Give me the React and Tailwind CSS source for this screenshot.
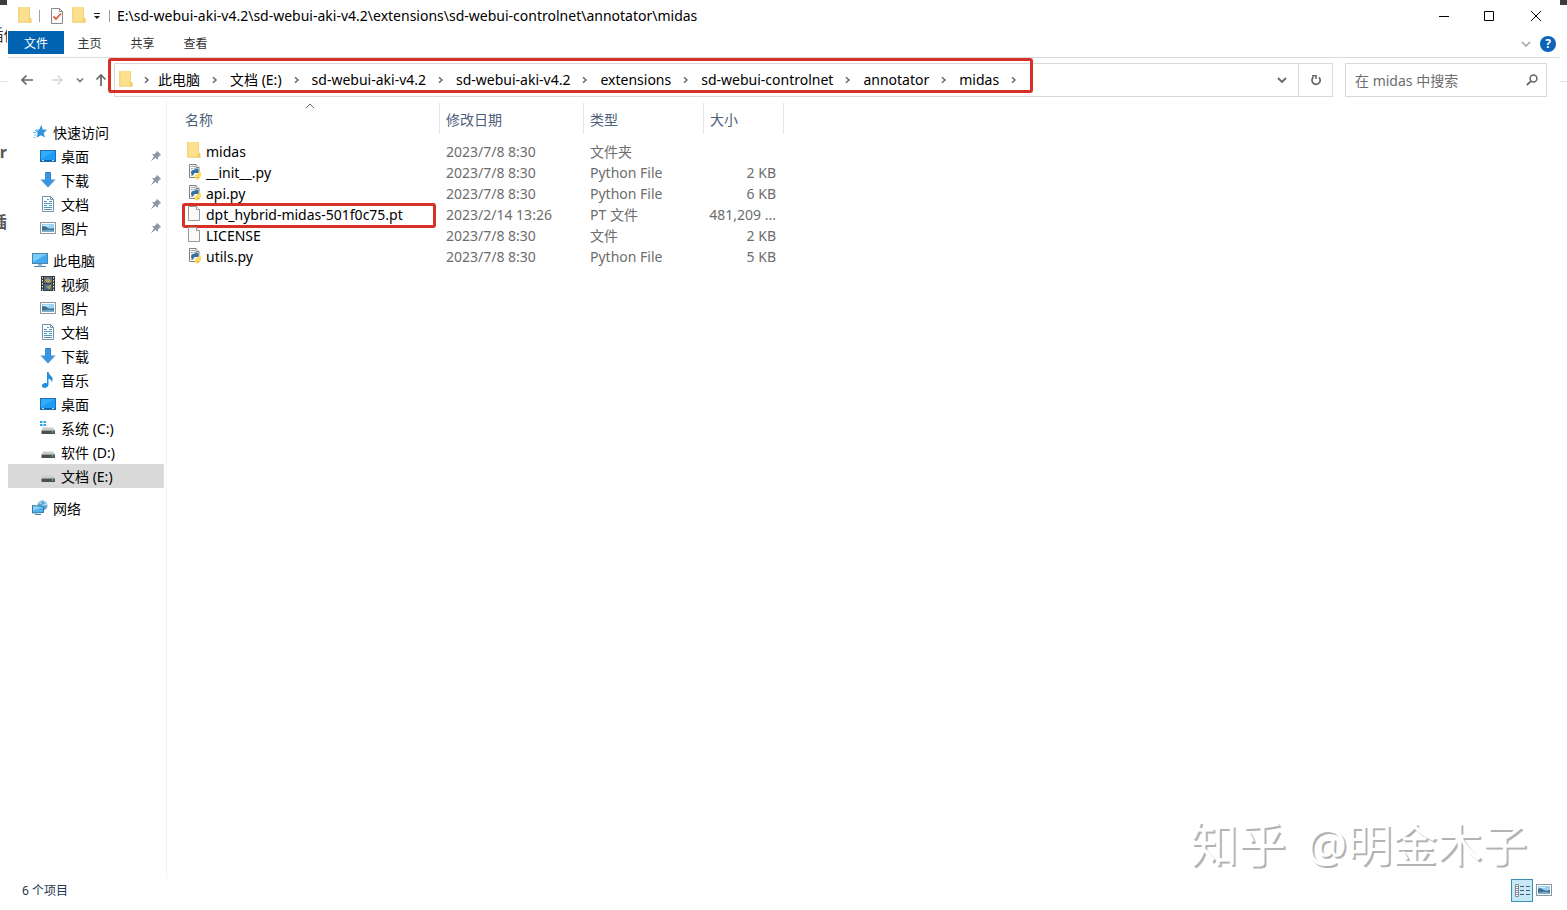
import React from 'react';

function FolderIcon() {
  return (
    <svg viewBox="0 0 16 18" className="h-[18px] w-4 shrink-0" aria-hidden="true">
      <path d="M.5 0h11v15H.5z" fill="#fbe08e" />
      <path d="M11 10.500q2.500-.5 2.500 1.500v3.500H11z" fill="#f3cd62" />
      <path d="M.8 0v15.500M.5 15.200h13" stroke="#efcb68" fill="none" />
      <path d="M11.500 0v10.500" stroke="#f1d27c" fill="none" />
    </svg>
  );
}

function FileIcon() {
  return (
    <svg viewBox="0 0 16 16" className="h-4 w-4 shrink-0" aria-hidden="true">
      <path d="M1.500.5h8l3 3v11h-11z" fill="#fafafa" stroke="#9a9a9a" />
      <path d="M9.500.5v3h3" fill="#fff" stroke="#9a9a9a" />
    </svg>
  );
}

function PythonIcon() {
  return (
    <svg viewBox="0 0 16 16" className="h-4 w-4 shrink-0" aria-hidden="true">
      <path d="M2.500.5h6.500l3 3v10h-9.500z" fill="#f7f7f7" stroke="#828282" />
      <path d="M9 .5v3h3" fill="#fff" stroke="#828282" />
      <path d="M4 2.500h4M4 4.500h2M4 11.500h2" stroke="#a5a9ac" />
      <path d="M7 4.500h3q1.500 0 1.500 1.500v3H8q-1.500 0-1.500 2H5.500Q4 11 4 8.500T6 6h2.500v-.5h-2z" fill="#33709f" />
      <path d="M11.700 7.500h1q1.500.3 1.500 3t-2 2.500H10v.6h2.500v.7q0 1.200-2.200 1.200T8 14.300v-2.500Q8 10 10 10h1.700z" fill="#ffdb58" />
    </svg>
  );
}

function CheckDocIcon() {
  return (
    <svg viewBox="0 0 14 16" className="h-4 w-[14px]" aria-hidden="true">
      <path d="M1.500.5h8l3 3v12h-11z" fill="#fbfbfb" stroke="#8a8a8a" />
      <path d="M9.500.5v3h3" fill="none" stroke="#8a8a8a" />
      <path d="M3.500 8.500l2.500 2.500 5-5.500" fill="none" stroke="#d9603b" strokeWidth="1.800" />
    </svg>
  );
}

function StarIcon() {
  return (
    <svg viewBox="0 0 16 16" className="h-4 w-4" aria-hidden="true">
      <path d="M9.500.8l1.200 4.700 4.500.3-3.500 3.200 1.200 4.500-4-2.300-4.200 2.500.9-4.700-2.600-3 4.300-.5z" fill="#2f93de" />
      <path d="M9.500.8L7.300 5.500 3 6l2.600 3z" fill="#63b8f1" />
      <path d="M1 8.500h3M2 11h2.500M1.500 13.500h2" stroke="#6fbdf0" />
    </svg>
  );
}

function DesktopIcon() {
  return (
    <svg viewBox="0 0 16 16" className="h-4 w-4" aria-hidden="true">
      <rect x=".5" y="2.500" width="15" height="11" fill="#1e9bf4" stroke="#1b72b5" />
      <path d="M1 3h14L1 11z" fill="#36aafb" />
      <path d="M1 12.500h14" stroke="#0d67ae" />
      <path d="M2 12.500h2M12 12.500h2" stroke="#b9e0fa" />
    </svg>
  );
}

function DownloadIcon() {
  return (
    <svg viewBox="0 0 16 16" className="h-4 w-4" aria-hidden="true">
      <path d="M5 .5h6v7h4.500L8 15.500.5 7.500H5z" fill="#3c94df" />
      <path d="M5.500.5h5v7" fill="none" stroke="#3180c6" />
    </svg>
  );
}

function DocumentIcon() {
  return (
    <svg viewBox="0 0 16 16" className="h-4 w-4" aria-hidden="true">
      <path d="M2.500.5h8l3 3v12h-11z" fill="#fdfeff" stroke="#7793a3" />
      <path d="M10.500.5v3h3" fill="none" stroke="#7793a3" />
      <path d="M7 3.500h2M4 5.500h3M9 5.500h3M4 7.500h8M4 9.500h3M9 9.500h3M4 11.500h8M4 13.500h8" stroke="#4f94bb" />
    </svg>
  );
}

function PictureIcon() {
  return (
    <svg viewBox="0 0 16 16" className="h-4 w-4" aria-hidden="true">
      <rect x=".5" y="2.500" width="15" height="11" fill="#fff" stroke="#8998a3" />
      <rect x="2" y="4" width="12" height="8" fill="#9bd0f2" />
      <path d="M2 6.500q3-1 5 1t7 .5V12H2z" fill="#3d6f91" />
      <path d="M2 10.500q6-1.500 12 0V12H2z" fill="#79add0" />
      <path d="M3 5h6v1H3z" fill="#d8eefa" />
    </svg>
  );
}

function PcIcon() {
  return (
    <svg viewBox="0 0 16 16" className="h-4 w-4" aria-hidden="true">
      <rect x=".5" y="1.500" width="15" height="10" fill="#3faaf0" stroke="#4a86ac" />
      <path d="M1 2h14L1 10z" fill="#7accf8" />
      <path d="M6 12h4v2H6z" fill="#8fb9cf" />
      <path d="M2 14.500h12" stroke="#5b8dab" />
    </svg>
  );
}

function VideoIcon() {
  return (
    <svg viewBox="0 0 16 16" className="h-4 w-4" aria-hidden="true">
      <path d="M1 0h14v15H1z" fill="#3b3b3d" />
      <path d="M2.500 1v14M13.500 1v14" stroke="#e4e4e4" strokeDasharray="1.500 1.500" />
      <path d="M4 1h8v6H4z" fill="#59748d" />
      <path d="M4 8h8v6H4z" fill="#4a6583" />
      <path d="M5 4l3-2 3 3-2 2-3-1z" fill="#b9a24d" />
      <path d="M5 9.500l2 1 4-2v3l-2 2z" fill="#9ca35b" />
    </svg>
  );
}

function MusicIcon() {
  return (
    <svg viewBox="0 0 16 16" className="h-4 w-4" aria-hidden="true">
      <path d="M7 0h1.500q.3 2.500 2.700 4.300Q14 6.500 11.500 10.500q.5-3-3-4V13q-.5 2.500-3.500 3-3 0-3-2.200T5 11q1.200-.2 2 .2z" fill="#1d8fe1" />
    </svg>
  );
}

function DriveIcon({ system }) {
  return (
    <svg viewBox="0 0 16 16" className="h-4 w-4" aria-hidden="true">
      {system && <path d="M0 1h2.500v2H0zM3.500 1H6v2H3.500zM0 4h2.500v2H0zM3.500 4H6v2H3.500z" fill="#28a8e0" />}
      <path d="M3 7.500h10l2 3H1.500z" fill="#c9cccd" />
      <path d="M1.500 10.500H15v3.500H1.500z" fill="#4c5052" />
      <path d="M11.500 12h2" stroke="#57e08a" />
    </svg>
  );
}

function NetworkIcon() {
  return (
    <svg viewBox="0 0 16 16" className="h-4 w-4" aria-hidden="true">
      <circle cx="10.500" cy="5.500" r="5" fill="#5aa5d8" />
      <path d="M7 3q3 2 2-2M10 9q-1-3 1-4t4 0M12 1q0 2 3 3" stroke="#cfe8f7" fill="none" />
      <path d="M.5 5.500l11 1v6l-11 .5z" fill="#4eb0ea" stroke="#3877a3" />
      <path d="M1 6l10 1-10 4z" fill="#86cff6" />
      <path d="M3 14.500h6" stroke="#4d83a6" />
    </svg>
  );
}

function PinIcon() {
  return (
    <svg viewBox="0 0 12 12" className="h-3 w-3" aria-hidden="true">
      <path d="M7 .8L11.200 5l-1.400.4L8 7.200l-.3 2.800-2.200-2.200L.8 11.500 4 6.300 2 4.300l2.700-.3L6.600 2.200z" fill="#8796a4" />
    </svg>
  );
}

function Chevron({ className }) {
  return (
    <svg viewBox="0 0 10 10" className={className} fill="none" aria-hidden="true">
      <path d="M1 3l4 4 4-4" stroke="currentColor" strokeWidth="1.300" />
    </svg>
  );
}

const quick = [
  ['桌面', DesktopIcon],
  ['下载', DownloadIcon],
  ['文档', DocumentIcon],
  ['图片', PictureIcon],
];

const computer = [
  ['视频', VideoIcon],
  ['图片', PictureIcon],
  ['文档', DocumentIcon],
  ['下载', DownloadIcon],
  ['音乐', MusicIcon],
  ['桌面', DesktopIcon],
  ['系统 (C:)', DriveIcon, true],
  ['软件 (D:)', DriveIcon],
  ['文档 (E:)', DriveIcon],
];

const crumbs = ['此电脑', '文档 (E:)', 'sd-webui-aki-v4.2', 'sd-webui-aki-v4.2', 'extensions', 'sd-webui-controlnet', 'annotator', 'midas'];

const files = [
  ['midas', '2023/7/8 8:30', '文件夹', '', FolderIcon],
  ['__init__.py', '2023/7/8 8:30', 'Python File', '2 KB', PythonIcon],
  ['api.py', '2023/7/8 8:30', 'Python File', '6 KB', PythonIcon],
  ['dpt_hybrid-midas-501f0c75.pt', '2023/2/14 13:26', 'PT 文件', '481,209 ...', FileIcon],
  ['LICENSE', '2023/7/8 8:30', '文件', '2 KB', FileIcon],
  ['utils.py', '2023/7/8 8:30', 'Python File', '5 KB', PythonIcon],
];

function TreeRoot({ label, Icon }) {
  return (
    <a href="#" className="flex h-6 items-center gap-[5px] pl-6">
      <Icon />
      <span className="pt-0.5">{label}</span>
    </a>
  );
}

function TreeItem({ label, Icon, system, pinned, selected }) {
  return (
    <a href="#" className={selected ? 'flex h-6 items-center gap-[5px] bg-[#d9d9d9] pl-8' : 'flex h-6 items-center gap-[5px] pl-8'}>
      <Icon system={system} />
      <span className="grow pt-0.5">{label}</span>
      {pinned && <span className="pr-[2px]"><PinIcon /></span>}
    </a>
  );
}

function TitleBar() {
  return (
    <header className="flex h-[31px] items-center pl-[10px]">
      <FolderIcon />
      <span className="ml-[5px] h-3 w-px bg-[#a0a0a0]" />
      <button type="button" aria-label="属性" className="ml-[10px]"><CheckDocIcon /></button>
      <button type="button" aria-label="新建文件夹" className="ml-2"><FolderIcon /></button>
      <button type="button" aria-label="自定义快速访问工具栏" className="ml-[5px]">
        <svg viewBox="0 0 8 8" className="h-2 w-2" aria-hidden="true">
          <path d="M1 1.500h6" stroke="#222" />
          <path d="M1 4h6L4 7z" fill="#222" />
        </svg>
      </button>
      <span className="ml-2 h-3 w-px bg-[#a0a0a0]" />
      <h1 className="ml-[7px] grow text-[14px]">E:\sd-webui-aki-v4.2\sd-webui-aki-v4.2\extensions\sd-webui-controlnet\annotator\midas</h1>
      <button type="button" aria-label="最小化" className="flex h-full w-[45px] items-center justify-center">
        <svg viewBox="0 0 10 10" className="h-[10px] w-[10px]"><path d="M0 5.500h10" stroke="#000" /></svg>
      </button>
      <button type="button" aria-label="最大化" className="flex h-full w-[45px] items-center justify-center">
        <svg viewBox="0 0 10 10" className="h-[10px] w-[10px]"><path d="M.5.5h9v9h-9z" fill="none" stroke="#000" /></svg>
      </button>
      <button type="button" aria-label="关闭" className="flex h-full w-[49px] items-center justify-center">
        <svg viewBox="0 0 10 10" className="h-[10px] w-[10px]"><path d="M0 0l10 10M10 0L0 10" stroke="#000" /></svg>
      </button>
    </header>
  );
}

function RibbonTabs() {
  return (
    <div className="flex h-[27px] border-b border-[#dadbdc] text-[12px]">
      <button type="button" className="h-[23px] w-14 bg-[#0063b1] pt-0.5 text-white">文件</button>
      <div className="-ml-px flex text-[#333]">
        <button type="button" className="h-[23px] w-[53px] pt-0.5">主页</button>
        <button type="button" className="h-[23px] w-[53px] pt-0.5">共享</button>
        <button type="button" className="h-[23px] w-[53px] pt-0.5">查看</button>
      </div>
      <div className="ml-auto flex items-center gap-[9px] pr-1">
        <button type="button" aria-label="展开功能区" className="text-[#999]"><Chevron className="h-[10px] w-[10px]" /></button>
        <button type="button" aria-label="帮助" className="h-4 w-4 rounded-full bg-[#0a64b8] font-bold leading-4 text-white">?</button>
      </div>
    </div>
  );
}

function NavBar() {
  return (
    <div className="flex items-center pb-1 pr-[13px] pt-[5px]">
      <button type="button" aria-label="后退" className="ml-[13px] text-[#666]">
        <svg viewBox="0 0 12 12" className="h-3 w-3" fill="none"><path d="M12 6H1M5.500 1.500L1 6l4.500 4.500" stroke="currentColor" strokeWidth="1.700" /></svg>
      </button>
      <button type="button" aria-label="前进" className="ml-[18px] text-[#d6d6d6]">
        <svg viewBox="0 0 12 12" className="h-3 w-3" fill="none"><path d="M.5 6H11M6.500 1.500L11 6l-4.500 4.500" stroke="currentColor" strokeWidth="1.400" /></svg>
      </button>
      <button type="button" aria-label="最近位置" className="ml-[13px] text-[#777]">
        <svg viewBox="0 0 8 8" className="h-2 w-2" fill="none"><path d="M1 2.500l3 3 3-3" stroke="currentColor" strokeWidth="1.600" /></svg>
      </button>
      <button type="button" aria-label="上移" className="ml-[11px] text-[#666]">
        <svg viewBox="0 0 12 12" className="h-3 w-3" fill="none"><path d="M6 12V1M1.500 5.500L6 1l4.500 4.500" stroke="currentColor" strokeWidth="1.700" /></svg>
      </button>
      <div className="relative ml-[7px] flex h-[34px] grow items-center border border-[#d9d9d9] pl-[4px]">
        <FolderIcon />
        <nav aria-label="路径" className="flex items-center">
          {crumbs.map((c, i) => (
            <React.Fragment key={i}>
              <Separator first={i === 0} />
              <a href="#" className="whitespace-nowrap">{c}</a>
            </React.Fragment>
          ))}
          <Separator />
        </nav>
        <div className="pointer-events-none absolute -left-[7px] -top-[6px] h-[35px] w-[925px] rounded-[3px] border-[3px] border-[#d93025]" />
        <button type="button" aria-label="历史记录" className="ml-auto flex h-full w-8 items-center justify-center text-[#666]">
          <svg viewBox="0 0 10 10" className="h-[10px] w-[10px]" fill="none"><path d="M1 3l4 4 4-4" stroke="currentColor" strokeWidth="1.800" /></svg>
        </button>
        <button type="button" aria-label="刷新" className="flex h-full w-[34px] items-center justify-center border-l border-[#d9d9d9] text-[#666]">
          <svg viewBox="0 0 12 12" className="h-3 w-3" fill="none">
            <path d="M9 3.300A4.100 4.100 0 1 1 3.500 3" stroke="currentColor" strokeWidth="1.700" />
            <path d="M2 1.700h4.300M6 1v4" stroke="currentColor" strokeWidth="1.500" />
          </svg>
        </button>
      </div>
      <div className="ml-3 flex h-[34px] w-[202px] items-center border border-[#d9d9d9] pl-[9px] pr-2">
        <input aria-label="搜索" placeholder="在 midas 中搜索" className="w-full min-w-0 bg-transparent pt-0.5 outline-none placeholder:text-[#6d6d6d]" />
        <svg viewBox="0 0 12 12" className="h-3 w-3 shrink-0 text-[#666]" fill="none" aria-hidden="true">
          <circle cx="7.500" cy="4.500" r="3.400" stroke="currentColor" strokeWidth="1.500" />
          <path d="M5 7L.8 11.200" stroke="currentColor" strokeWidth="1.800" />
        </svg>
      </div>
    </div>
  );
}

function Separator({ first }) {
  return (
    <span className={first ? 'flex w-[23px] justify-center text-[#666]' : 'flex w-[30px] justify-center text-[#666]'}>
      <svg viewBox="0 0 6 8" className="h-2 w-[6px]" fill="none" aria-hidden="true"><path d="M1 1.200L4 4 1 6.800" stroke="currentColor" strokeWidth="1.500" /></svg>
    </span>
  );
}

function FileTable() {
  return (
    <table className="w-[617px] table-fixed border-separate border-spacing-0 text-left">
      <colgroup>
        <col className="w-[273px]" />
        <col className="w-[144px]" />
        <col className="w-[120px]" />
        <col className="w-[80px]" />
      </colgroup>
      <thead className="text-[#4c607a]">
        <tr className="h-[31px]">
          <th className="relative border-r border-[#e5e5e5] p-0 pl-[18px] pt-0.5 font-normal">
            名称
            <svg viewBox="0 0 10 6" className="absolute left-[138px] top-0 h-[6px] w-[10px] text-[#666]" fill="none" aria-hidden="true"><path d="M1 5l4-4 4 4" stroke="currentColor" /></svg>
          </th>
          <th className="border-r border-[#e5e5e5] p-0 pl-[6px] pt-0.5 font-normal">修改日期</th>
          <th className="border-r border-[#e5e5e5] p-0 pl-[6px] pt-0.5 font-normal">类型</th>
          <th className="border-r border-[#e5e5e5] p-0 pl-[6px] pt-0.5 font-normal">大小</th>
        </tr>
      </thead>
      <tbody className="text-[#6d6d6d]">
        <tr className="h-[7px]" aria-hidden="true"><td colSpan={4} className="p-0" /></tr>
        {files.map(([name, date, type, size, Icon]) => (
          <tr key={name} className="h-[21px] leading-[21px]">
            <td className="relative p-0 pl-5 text-black">
              <a href="#" className="flex h-[21px] items-center gap-[3px] whitespace-nowrap">
                <span className="pb-0.5"><Icon /></span>
                {name}
              </a>
              {name.startsWith('dpt') && (
                <span className="pointer-events-none absolute -top-[1px] left-[15px] h-[25px] w-[254px] rounded-[3px] border-[3px] border-[#d93025]" />
              )}
            </td>
            <td className="p-0 pl-[6px]">{date}</td>
            <td className="p-0 pl-[6px]">{type}</td>
            <td className="whitespace-nowrap p-0 pr-2 text-right">{size}</td>
          </tr>
        ))}
      </tbody>
    </table>
  );
}

export default function App() {
  return (
    <div className="flex min-h-screen bg-white font-['Noto_Sans','Noto_Sans_CJK_SC',sans-serif] text-[14px] leading-5 text-black">
      <div className="flex w-2 shrink-0 flex-col overflow-hidden text-[#333]" aria-hidden="true">
        <div className="h-[5px] w-[7px] shrink-0 bg-[#3c3c3c]" />
        <span className="mt-5 flex h-5 w-[7px] justify-center overflow-hidden whitespace-nowrap text-[16px]">插件</span>
        <div className="mt-[36px] h-px bg-[#e4e4e4]" />
        <span className="mt-[60px] flex h-5 w-[7px] justify-end overflow-hidden text-[16px] font-bold text-[#555]">or</span>
        <span className="mt-[50px] flex h-5 w-[7px] justify-end overflow-hidden text-[16px] font-bold text-[#555]">插</span>
      </div>
      <div className="relative flex min-w-0 grow flex-col">
        <TitleBar />
        <RibbonTabs />
        <NavBar />
        <div className="flex grow">
          <aside className="w-[159px] shrink-0 border-r border-[#f3f3f3] pr-[2px] pt-[19px]">
            <TreeRoot label="快速访问" Icon={StarIcon} />
            {quick.map(([label, Icon]) => <TreeItem key={label} label={label} Icon={Icon} pinned />)}
            <div className="h-2" />
            <TreeRoot label="此电脑" Icon={PcIcon} />
            {computer.map(([label, Icon, system]) => (
              <TreeItem key={label} label={label} Icon={Icon} system={system} selected={label === '文档 (E:)'} />
            ))}
            <div className="h-2" />
            <TreeRoot label="网络" Icon={NetworkIcon} />
          </aside>
          <main className="grow pt-[2px]">
            <FileTable />
          </main>
        </div>
        <footer className="flex h-8 items-start justify-between pl-[14px] pr-2 text-[12px] leading-6 text-[#24364f]">
          <span className="pt-px">6 个项目</span>
          <div className="flex items-center gap-[3px] pt-px">
            <button type="button" aria-label="详细信息" className="flex h-[23px] w-[22px] items-center justify-center border border-[#3d8fb0] bg-[#c5e9f8]">
              <svg viewBox="0 0 18 15" className="h-[15px] w-[18px]" fill="none">
                <path d="M2.500 1.500h3v12h-3zM2.500 5.500h3M2.500 9.500h3" stroke="#8d8597" fill="#fff" />
                <path d="M3.500 3.500h1M3.500 7.500h1M3.500 11.500h1" stroke="#222" />
                <path d="M7 3.500h4M13 3.500h4M7 7.500h4M13 7.500h4M7 11.500h4M13 11.500h4" stroke="#4b5a63" />
              </svg>
            </button>
            <button type="button" aria-label="大图标" className="pb-0.5"><PictureIcon /></button>
          </div>
        </footer>
        <div className="pointer-events-none absolute bottom-8 right-[33px] flex items-baseline whitespace-pre text-[45px] leading-[66px] text-white [text-shadow:2px_2px_0_#b3b3b3]">
          <span className="mr-2 text-[48px]">知乎 </span>
          <span>@明金木子</span>
        </div>
      </div>
      <div className="flex w-[7px] shrink-0 flex-col" aria-hidden="true">
        <div className="h-[5px] bg-[#3c3c3c]" />
        <div className="mt-[76px] h-px bg-[#e4e4e4]" />
      </div>
    </div>
  );
}
